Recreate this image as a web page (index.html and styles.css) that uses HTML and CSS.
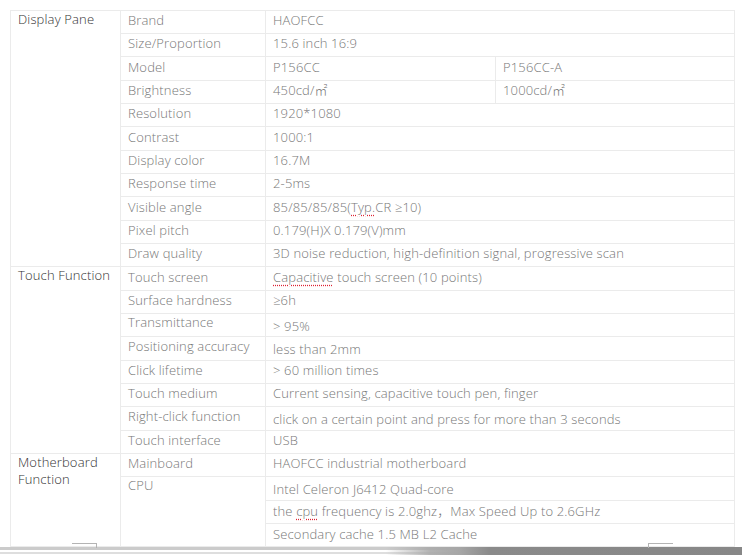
FILE: index.html
```html
<!DOCTYPE html>
<html lang="en">
<head>
    <meta charset="UTF-8">
    <title>Specifications</title>
    <link rel="stylesheet" href="styles.css">
</head>
<body>
    <div class="page">
        <table class="spec">
            <colgroup>
                <col class="c-group">
                <col class="c-name">
                <col class="c-val">
                <col class="c-alt">
            </colgroup>
            <tr>
                <td class="group" rowspan="11">Display Pane</td>
                <td>Brand</td>
                <td colspan="2">HAOFCC</td>
            </tr>
            <tr><td>Size/Proportion</td><td colspan="2">15.6 inch 16:9</td></tr>
            <tr><td>Model</td><td>P156CC</td><td>P156CC-A</td></tr>
            <tr><td>Brightness</td><td>450cd/㎡</td><td>1000cd/㎡</td></tr>
            <tr><td>Resolution</td><td colspan="2">1920*1080</td></tr>
            <tr><td>Contrast</td><td colspan="2">1000:1</td></tr>
            <tr><td>Display color</td><td colspan="2">16.7M</td></tr>
            <tr><td>Response time</td><td colspan="2">2-5ms</td></tr>
            <tr><td>Visible angle</td><td colspan="2">85/85/85/85(<span class="typo">Typ.</span>CR ≥10)</td></tr>
            <tr><td>Pixel pitch</td><td colspan="2">0.179(H)X 0.179(V)mm</td></tr>
            <tr><td>Draw quality</td><td colspan="2">3D noise reduction, high-definition signal, progressive scan</td></tr>

            <tr>
                <td class="group" rowspan="8">Touch Function</td>
                <td>Touch screen</td>
                <td colspan="2"><span class="typo">Capacitive</span> touch screen (10 points)</td>
            </tr>
            <tr><td>Surface hardness</td><td colspan="2">≥6h</td></tr>
            <tr><td class="up">Transmittance</td><td colspan="2" class="down">&gt; 95%</td></tr>
            <tr><td class="up">Positioning accuracy</td><td colspan="2" class="down">less than 2mm</td></tr>
            <tr><td>Click lifetime</td><td colspan="2">&gt; 60 million times</td></tr>
            <tr><td>Touch medium</td><td colspan="2">Current sensing, capacitive touch pen, finger</td></tr>
            <tr><td class="up">Right-click function</td><td colspan="2" class="down">click on a certain point and press for more than 3 seconds</td></tr>
            <tr><td>Touch interface</td><td colspan="2">USB</td></tr>

            <tr>
                <td class="group" rowspan="4">Motherboard Function</td>
                <td>Mainboard</td>
                <td colspan="2">HAOFCC industrial motherboard</td>
            </tr>
            <tr>
                <td class="top" rowspan="3">CPU</td>
                <td colspan="2" class="down">Intel Celeron J6412 Quad-core</td>
            </tr>
            <tr><td colspan="2" class="mid">the <span class="typo">cpu</span> frequency is 2.0ghz，Max Speed Up to 2.6GHz</td></tr>
            <tr><td colspan="2" class="mid">Secondary cache 1.5 MB L2 Cache</td></tr>
        </table>

        <div class="tick tick-left"></div>
        <div class="tick tick-right"></div>
    </div>
    <div class="hscroll"></div>
</body>
</html>
```

FILE: styles.css
```css
body {
    margin: 0;
    background: #fff;
    font-family: "Open Sans", "Noto Sans", "Noto Sans CJK SC", sans-serif;
    font-size: 13px;
    letter-spacing: 0.15px;
    color: #777;
    overflow: hidden;
}
.page {
    position: relative;
    padding: 10px 0 0 10px;
    height: 537px;
}
.spec {
    border-collapse: collapse;
    width: 724px;
    table-layout: fixed;
}
.c-group { width: 110px; }
.c-name { width: 145px; }
.c-val { width: 230px; }
.c-alt { width: 239px; }

.spec tr {
    height: 23px;
}
.spec tr:nth-child(3n) {
    height: 24px;
}
.spec td {
    border: 1px solid #ebebeb;
    padding: 0 7px 3px;
    line-height: 17px;
    vertical-align: middle;
    white-space: nowrap;
    font-weight: 300;
}
.spec td.group {
    vertical-align: top;
    color: #333;
    white-space: normal;
    padding-top: 0;
}
.spec td.top {
    vertical-align: top;
    padding-top: 0;
}
.spec td.up { padding-bottom: 5px; }
.spec td.down { padding-top: 2px; padding-bottom: 0; }
.spec td.mid { padding-bottom: 1px; }

.typo {
    text-decoration: underline dotted #d23;
    text-underline-offset: 3px;
}

/* small marks left over near the bottom edge */
.tick {
    position: absolute;
    top: 543px;
    width: 24px;
    height: 4px;
    border-top: 1px solid #b4b4b4;
}
.tick-left {
    left: 72px;
    border-right: 1px solid #b4b4b4;
}
.tick-right {
    left: 648px;
    border-left: 1px solid #b4b4b4;
}

.hscroll {
    height: 8px;
    background:
        linear-gradient(to right, rgba(136,136,136,0) 52%, rgba(170,170,170,0.9) 58%, #a6a6a6 62%, #8a8a8a 66%, #878787),
        linear-gradient(#cbcbcb 0, #cbcbcb 3px, #fff 3px, #fff 5px, #dedede 5px, #dedede 7px, #fff 7px);
}
```
